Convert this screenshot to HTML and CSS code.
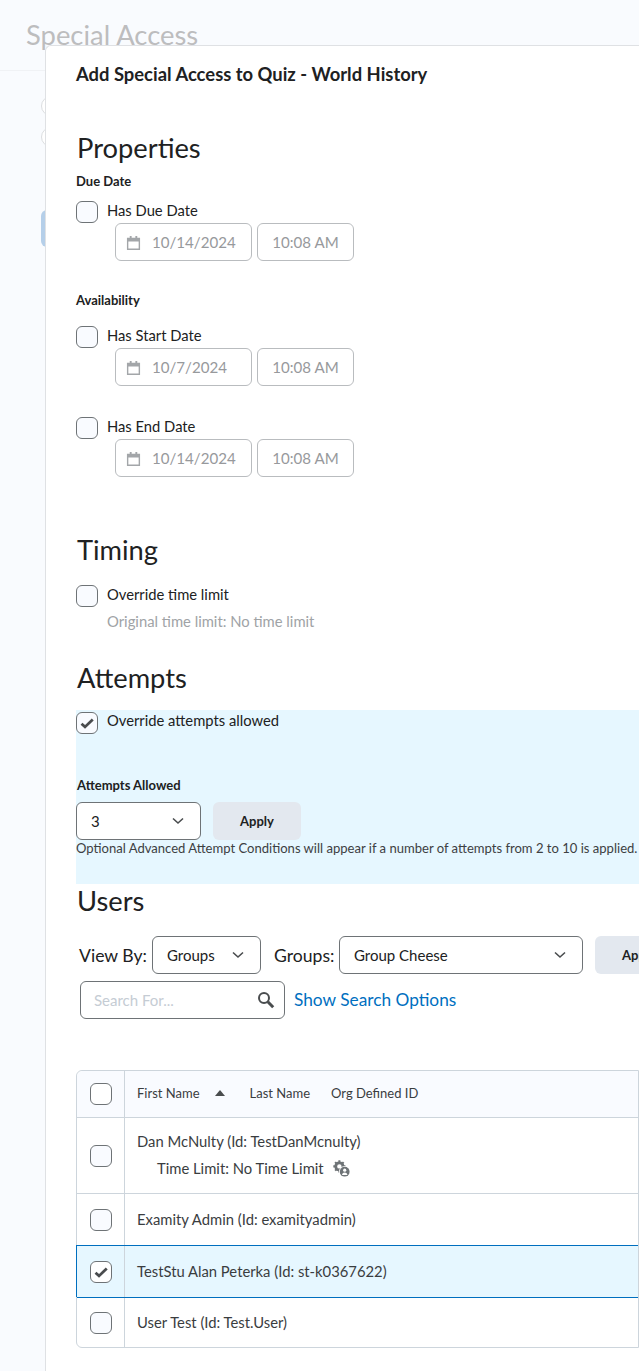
FILE: index.html
```html
<!DOCTYPE html>
<html lang="en">
<head>
  <meta charset="UTF-8">
  <title>Special Access</title>
  <link rel="stylesheet" href="styles.css">
</head>
<body>
  <div class="page-head">
    <h1>Special Access</h1>
  </div>
  <div class="behind">
    <span class="radio"></span>
    <span class="radio"></span>
    <span class="behind-btn"></span>
  </div>

  <div class="dialog">
    <div class="dialog-title">Add Special Access to Quiz - World History</div>

    <h2 class="section-properties">Properties</h2>
    <div class="label">Due Date</div>
    <label class="check-row first"><span class="check"></span>Has Due Date</label>
    <div class="date-row">
      <div class="input date-input">
        <svg class="cal" viewBox="0 0 16 16"><path d="M1 3h3V1h2v2h4V1h2v2h3v13H1z M2.5 7v7.5h11V7z" fill="#a3a6a9" fill-rule="evenodd"/></svg>
        10/14/2024
      </div>
      <div class="input time-input">10:08 AM</div>
    </div>

    <div class="label label-avail">Availability</div>
    <label class="check-row avail"><span class="check"></span>Has Start Date</label>
    <div class="date-row">
      <div class="input date-input">
        <svg class="cal" viewBox="0 0 16 16"><path d="M1 3h3V1h2v2h4V1h2v2h3v13H1z M2.5 7v7.5h11V7z" fill="#a3a6a9" fill-rule="evenodd"/></svg>
        10/7/2024
      </div>
      <div class="input time-input">10:08 AM</div>
    </div>
    <label class="check-row end"><span class="check"></span>Has End Date</label>
    <div class="date-row">
      <div class="input date-input">
        <svg class="cal" viewBox="0 0 16 16"><path d="M1 3h3V1h2v2h4V1h2v2h3v13H1z M2.5 7v7.5h11V7z" fill="#a3a6a9" fill-rule="evenodd"/></svg>
        10/14/2024
      </div>
      <div class="input time-input">10:08 AM</div>
    </div>

    <h2 class="section-timing">Timing</h2>
    <label class="check-row timing"><span class="check"></span>Override time limit</label>
    <div class="note">Original time limit: No time limit</div>

    <h2 class="section-attempts">Attempts</h2>
    <div class="attempts">
      <label class="check-row override">
        <span class="check">
          <svg viewBox="0 0 16 16"><path d="M3.6 8.6l2.8 2.5 6.2-5.9" fill="none" stroke="#494c4e" stroke-width="2.2"/></svg>
        </span>
        Override attempts allowed
      </label>
      <div class="label label-attempts">Attempts Allowed</div>
      <div class="attempts-row">
        <div class="select select-attempts">3
          <svg class="chev" viewBox="0 0 12 8"><path d="M1 1.5l5 4.5 5-4.5" fill="none" stroke="#494c4e" stroke-width="1.6"/></svg>
        </div>
        <div class="btn">Apply</div>
      </div>
      <div class="help">Optional Advanced Attempt Conditions will appear if a number of attempts from 2 to 10 is applied.</div>
    </div>

    <h2 class="section-users">Users</h2>
    <div class="filter-row">
      <span class="filter-label">View By:</span>
      <div class="select select-view">Groups
        <svg class="chev" viewBox="0 0 12 8"><path d="M1 1.5l5 4.5 5-4.5" fill="none" stroke="#494c4e" stroke-width="1.6"/></svg>
      </div>
      <span class="filter-label groups-label">Groups:</span>
      <div class="select select-group">Group Cheese
        <svg class="chev" viewBox="0 0 12 8"><path d="M1 1.5l5 4.5 5-4.5" fill="none" stroke="#494c4e" stroke-width="1.6"/></svg>
      </div>
      <div class="btn btn-filter">Apply</div>
    </div>
    <div class="search-row">
      <div class="search">
        <span>Search For...</span>
        <svg class="mag" viewBox="0 0 18 18"><circle cx="7" cy="7" r="5" fill="none" stroke="#494c4e" stroke-width="2"/><path d="M10.8 10.8l5.4 5.4" stroke="#494c4e" stroke-width="3"/></svg>
      </div>
      <a class="search-link">Show Search Options</a>
    </div>

    <div class="users">
      <div class="row head">
        <div class="cell-check"><span class="check white"></span></div>
        <div class="cell-main head-cols">
          <span>First Name</span>
          <svg class="sort" viewBox="0 0 10 6"><path d="M0 6L5 0l5 6z" fill="#494c4e"/></svg>
          <span class="col-last">Last Name</span>
          <span class="col-org">Org Defined ID</span>
        </div>
      </div>
      <div class="row tall">
        <div class="cell-check"><span class="check"></span></div>
        <div class="cell-main">
          <div>Dan McNulty (Id: TestDanMcnulty)</div>
          <div class="sub">Time Limit: No Time Limit
            <svg class="gear" viewBox="0 0 16 16">
              <circle cx="6" cy="6" r="3.4" fill="none" stroke="#6e7376" stroke-width="2.6"/>
              <path d="M6 .3v2.4M6 9.3v2.4M.3 6h2.4M9.3 6h2.4M2 2l1.6 1.6M8.4 8.4L10 10M2 10l1.6-1.6M10 2L8.4 3.6" stroke="#6e7376" stroke-width="1.9"/>
              <circle cx="11" cy="11" r="5.4" fill="#fff"/>
              <circle cx="11" cy="11" r="4.6" fill="#6e7376"/>
              <circle cx="11" cy="9.6" r="1.5" fill="#fff"/>
              <path d="M8.4 14.2c.3-1.9 1.3-2.5 2.6-2.5s2.3.6 2.6 2.5z" fill="#fff"/>
            </svg>
          </div>
        </div>
      </div>
      <div class="row">
        <div class="cell-check"><span class="check"></span></div>
        <div class="cell-main">Examity Admin (Id: examityadmin)</div>
      </div>
      <div class="row selected">
        <div class="cell-check">
          <span class="check white">
            <svg viewBox="0 0 16 16"><path d="M3.6 8.6l2.8 2.5 6.2-5.9" fill="none" stroke="#494c4e" stroke-width="2.2"/></svg>
          </span>
        </div>
        <div class="cell-main">TestStu Alan Peterka (Id: st-k0367622)</div>
      </div>
      <div class="row last">
        <div class="cell-check"><span class="check"></span></div>
        <div class="cell-main">User Test (Id: Test.User)</div>
      </div>
    </div>
  </div>
</body>
</html>
```

FILE: styles.css
```css
html, body {
  margin: 0;
  height: 1371px;
  overflow: hidden;
}

body {
  position: relative;
  font-family: Lato, "Open Sans", sans-serif;
  color: #202122;
  background-color: #f9fbfe;
}

.page-head {
  height: 71px;
  border-bottom: 1px solid #f0f2f5;
  box-sizing: border-box;
  padding: 16px 0 0 26px;
}

.page-head h1 {
  margin: 0;
  font-size: 27.4px;
  font-weight: 400;
  line-height: 38px;
  color: #bdbdbe;
}

.radio {
  position: absolute;
  left: 41px;
  width: 18px;
  height: 18px;
  border: 1px solid #dcdee0;
  border-radius: 50%;
  background-color: #fff;
}

.radio:nth-child(1) { top: 96px; }
.radio:nth-child(2) { top: 127px; }

.behind-btn {
  position: absolute;
  left: 41px;
  top: 210px;
  width: 30px;
  height: 37px;
  border-radius: 6px;
  background-color: #b5cfe9;
}

.dialog {
  position: absolute;
  left: 45px;
  top: 45px;
  width: 594px;
  height: 1326px;
  overflow: hidden;
  box-sizing: border-box;
  padding-left: 30px;
  background-color: #fff;
  border: 1px solid #dfe1e4;
  border-right: 0;
  border-bottom: 0;
  border-radius: 6px 0 0 0;
}

.dialog-title {
  margin-top: 16px;
  font-size: 18.4px;
  font-weight: 700;
  line-height: 24px;
}

h2 {
  margin: 0 0 0 1px;
  font-size: 27.3px;
  font-weight: 400;
  line-height: 34px;
}

.section-properties { margin-top: 45px; }
.section-timing { margin-top: 56px; }
.section-attempts { padding-top: 30px; }

.label {
  margin-top: 8px;
  font-size: 13px;
  font-weight: 700;
  line-height: 16px;
}

.label-avail { margin-top: 31px; }

.check-row {
  display: flex;
  align-items: flex-start;
  gap: 9px;
  height: 22px;
  font-size: 14.75px;
  line-height: 18px;
}

.check-row.first { margin-top: 12px; }
.check-row.avail { margin-top: 18px; }
.check-row.end { margin-top: 31px; }
.check-row.timing { margin-top: 18px; }

.check {
  display: block;
  box-sizing: border-box;
  width: 22px;
  height: 22px;
  flex: none;
  border: 1px solid #6e7376;
  border-radius: 6px;
  background-color: #f9fbff;
}

.check.white { background-color: #fff; }
.check svg { display: block; width: 20px; height: 20px; }

.date-row {
  display: flex;
  gap: 5px;
  margin-left: 39px;
}

.input {
  box-sizing: border-box;
  display: flex;
  align-items: center;
  height: 38px;
  border: 1px solid #b9bcbf;
  border-radius: 6px;
  font-size: 15.1px;
  color: #97999c;
  background-color: #fff;
}

.date-input { width: 137px; padding-left: 10px; gap: 11px; }
.time-input { width: 97px; justify-content: center; }

.cal { width: 15px; height: 15px; }

.note {
  margin: 4px 0 0 31px;
  font-size: 14.8px;
  line-height: 20px;
  color: #a0a3a6;
}

.attempts {
  height: 174px;
  margin-top: 15px;
  background-color: #e6f7ff;
  overflow: hidden;
}

.check-row.override { margin-top: 2px; line-height: 16px; }

.label-attempts { margin: 43px 0 0 1px; }

.attempts-row {
  display: flex;
  gap: 12px;
  margin-top: 9px;
}

.select {
  box-sizing: border-box;
  display: flex;
  align-items: center;
  justify-content: space-between;
  height: 38px;
  padding: 0 16px 0 14px;
  border: 1px solid #6e7376;
  border-radius: 6px;
  background-color: #fff;
  font-size: 15px;
  flex: none;
}

.select-attempts { width: 125px; }
.select-view { width: 109px; }
.select-group { width: 244px; }

.chev { width: 12px; height: 8px; }

.btn {
  box-sizing: border-box;
  width: 88px;
  height: 38px;
  border-radius: 6px;
  background-color: #e3e8ef;
  font-size: 13px;
  font-weight: 700;
  line-height: 38px;
  text-align: center;
}

.help {
  font-size: 13.05px;
  line-height: 16px;
  color: #3d4042;
  white-space: nowrap;
}

.filter-row {
  display: flex;
  align-items: center;
  margin: 18px 0 0 3px;
  font-size: 17.6px;
}

.filter-label { width: 73px; flex: none; }
.groups-label { width: 65px; margin-left: 13px; }
.btn-filter { margin-left: 12px; flex: none; }

.search-row {
  display: flex;
  align-items: center;
  gap: 9px;
  margin: 7px 0 0 4px;
}

.search {
  box-sizing: border-box;
  display: flex;
  align-items: center;
  justify-content: space-between;
  width: 205px;
  height: 38px;
  padding: 0 9px 0 13px;
  border: 1px solid #6e7376;
  border-radius: 6px;
  font-size: 15px;
  color: #c5ccd4;
}

.mag { width: 18px; height: 18px; }

.search-link {
  padding-bottom: 2px;
  font-size: 17.3px;
  color: #006fbf;
}

.users {
  margin-top: 51px;
  border: 1px solid #cdd5dc;
  border-radius: 6px 0 0 6px;
  font-size: 14.8px;
}

.row {
  display: flex;
  align-items: stretch;
  height: 52px;
  box-sizing: border-box;
  border-top: 1px solid #cdd5dc;
  color: #3a3d3f;
}

.row.head {
  height: 46px;
  border-top: 0;
  background-color: #f9fbff;
  font-size: 13px;
  border-radius: 6px 0 0 0;
}

.row.tall { height: 76px; }
.row.last { height: 50px; border-top-color: #006fbf; }

.row.selected {
  background-color: #e6f7ff;
  border-top-color: #006fbf;
  border-left: 1px solid #006fbf;
  margin-left: -1px;
}

.cell-check {
  box-sizing: border-box;
  width: 48px;
  flex: none;
  display: flex;
  align-items: center;
  justify-content: center;
  border-right: 1px solid #cdd5dc;
}

.cell-main {
  display: flex;
  flex-direction: column;
  justify-content: center;
  padding: 0 0 2px 12px;
}

.head-cols {
  flex-direction: row;
  align-items: center;
  justify-content: flex-start;
}

.sort { width: 10px; height: 6px; margin-left: 15px; }
.col-last { margin-left: 25px; }
.col-org { margin-left: 21px; }

.sub {
  display: flex;
  align-items: center;
  gap: 9px;
  margin: 9px 0 0 20px;
}

.gear { width: 17px; height: 17px; }
```
